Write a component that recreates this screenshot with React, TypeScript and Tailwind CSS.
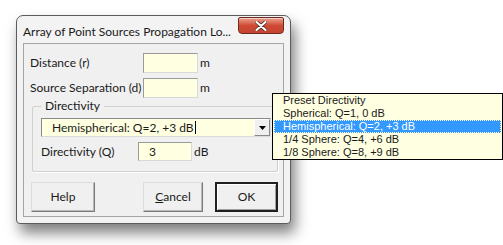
import React from 'react';

const ui = { fontFamily: 'Lato, "Noto Sans", sans-serif' };
const list = { fontFamily: '"Liberation Sans", Arial, sans-serif' };

function Field({ value = '', w = 'w-[55px]', h = 'h-[20px]' }: { value?: string; w?: string; h?: string }) {
  return (
    <div className={`${w} ${h} border border-[#9a9a9a] border-b-[#d8d8d8] border-r-[#d8d8d8] bg-[#ffffe1] pl-[10px] text-[12px] leading-[17px]`}>
      {value}
    </div>
  );
}

function Btn({ children, def = false, w }: { children: React.ReactNode; def?: boolean; w: string }) {
  return (
    <div
      className={`${w} h-[30px] flex items-center justify-center text-[12px] bg-[#f0f0f0] ${
        def
          ? 'border-2 border-[#202020] shadow-[inset_1px_1px_0_#fff,inset_-1px_-1px_0_#a0a0a0]'
          : 'border border-[#dcdcdc] border-b-[#7a7a7a] border-r-[#7a7a7a] shadow-[inset_-1px_-1px_0_#b8b8b8]'
      }`}
    >
      {children}
    </div>
  );
}

const options = [
  'Preset Directivity',
  'Spherical: Q=1, 0 dB',
  'Hemispherical: Q=2, +3 dB',
  '1/4 Sphere: Q=4, +6 dB',
  '1/8 Sphere: Q=8, +9 dB',
];

export default function App() {
  return (
    <div className="relative w-[503px] h-[245px] bg-white overflow-hidden pt-[15px] pl-[16px] text-[#1a1a1a]" style={ui}>
      {/* dialog window */}
      <div className="w-[275px] h-[209px] border border-[#5c5c5c] rounded-t-[7px] rounded-b-[4px] bg-[#f3f3f3] shadow-[4px_9px_14px_rgba(0,0,0,0.5)] flex flex-col">
        <div className="h-[27px] flex items-start justify-between pl-[6px] pr-[6px]">
          <span className="text-[12px] mt-[7px] whitespace-nowrap">Array of Point Sources Propagation Lo...</span>
          <div className="mt-[1px] w-[46px] h-[17px] rounded-b-[4px] rounded-t-[2px] border border-[#6d2a20] bg-gradient-to-b from-[#e9a08f] via-[#cf4a33] to-[#c5432f] flex items-center justify-center shadow-[inset_0_1px_0_rgba(255,255,255,0.5)]">
            <svg width="12" height="10" viewBox="0 0 12 10">
              <path d="M1.5 1 L10.5 9 M10.5 1 L1.5 9" stroke="#4a2a25" strokeWidth="3.6" strokeLinecap="round" />
              <path d="M1.5 1 L10.5 9 M10.5 1 L1.5 9" stroke="#ffffff" strokeWidth="2.2" strokeLinecap="round" />
            </svg>
          </div>
        </div>
        {/* client area */}
        <div className="mx-[6px] w-[261px] h-[174px] border border-[#a5a5a5] bg-[#f0f0f0] flex flex-col text-[12px]">
          <div className="flex items-center mt-[9px] h-[20px]">
            <span className="w-[119px] pl-[6px] whitespace-nowrap">Distance (r)</span>
            <Field />
            <span className="ml-[2px]">m</span>
          </div>
          <div className="flex items-center mt-[5px] h-[20px]">
            <span className="w-[119px] pl-[6px] whitespace-nowrap">Source Separation (d)</span>
            <Field />
            <span className="ml-[2px]">m</span>
          </div>
          {/* group box */}
          <div className="relative ml-[8px] mt-[8px] w-[246px] h-[66px] border border-[#d0d0d0] rounded-[2px] shadow-[1px_1px_0_#fff]">
            <span className="absolute -top-[9px] left-[8px] px-[4px] bg-[#f0f0f0] leading-[16px]">Directivity</span>
            <div className="ml-[8px] mt-[11px] w-[230px] h-[19px] flex border border-[#8a8a8a] border-b-[#dadada] border-r-[#dadada] bg-[#ffffe1]">
              <div className="flex-1 pl-[10px] whitespace-nowrap flex items-center">
                Hemispherical: Q=2, +3 dB<span className="inline-block w-[1px] h-[13px] bg-black ml-[1px]" />
              </div>
              <div className="w-[16px] h-[17px] border border-[#fff] border-r-[#8a8a8a] border-b-[#8a8a8a] bg-[#f0f0f0] flex items-center justify-center">
                <svg width="7" height="4" viewBox="0 0 7 4">
                  <path d="M0 0 H7 L3.5 4 Z" fill="#000" />
                </svg>
              </div>
            </div>
            <div className="flex items-center mt-[5px] h-[19px]">
              <span className="w-[105px] pl-[8px] whitespace-nowrap">Directivity (Q)</span>
              <Field value="3" w="w-[54px]" h="h-[19px]" />
              <span className="ml-[2px]">dB</span>
            </div>
          </div>
          {/* buttons */}
          <div className="flex mt-[10px] ml-[7px]">
            <Btn w="w-[64px]">Help</Btn>
            <div className="ml-[48px]">
              <Btn w="w-[60px]">
                <span>
                  <span className="underline">C</span>ancel
                </span>
              </Btn>
            </div>
            <div className="ml-[12px]">
              <Btn w="w-[63px]" def>
                OK
              </Btn>
            </div>
          </div>
        </div>
      </div>

      {/* open dropdown list */}
      <div className="absolute left-[272px] top-[93px] w-[231px] h-[67px] border border-black bg-[#ffffe1] text-[11px]" style={list}>
        {options.map((o, i) => (
          <div
            key={o}
            className={`h-[13px] leading-[13px] pl-[9px] mx-[1px] whitespace-nowrap ${
              i === 2 ? 'bg-[#3399ff] text-white outline outline-1 outline-dotted outline-[#ffffe1] -outline-offset-1' : ''
            }`}
          >
            {o}
          </div>
        ))}
      </div>
    </div>
  );
}
